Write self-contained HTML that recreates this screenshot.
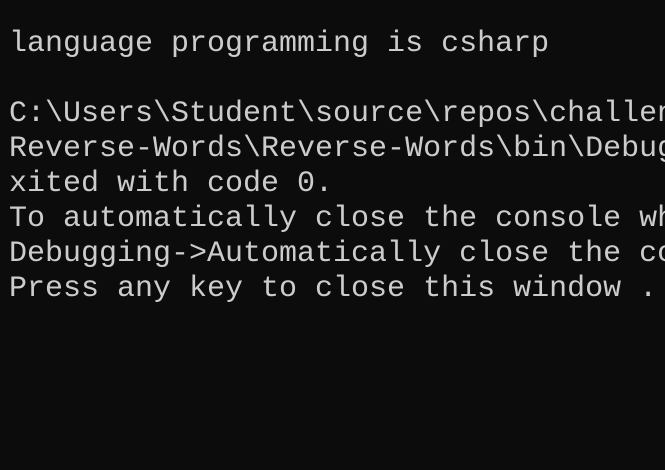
<!DOCTYPE html>
<html><head><meta charset="utf-8"><style>
html,body{margin:0;padding:0;background:#0c0c0c;width:665px;height:470px;overflow:hidden}
pre{margin:0;padding:27px 0 0 9px;width:656px;height:443px;overflow:hidden;font-family:"Liberation Mono","DejaVu Sans Mono",monospace;font-size:30px;line-height:35px;color:#cccccc;white-space:pre;}
</style></head><body><pre>language programming is csharp

C:\Users\Student\source\repos\challen
Reverse-Words\Reverse-Words\bin\Debug
xited with code 0.
To automatically close the console wh
Debugging->Automatically close the co
Press any key to close this window . </pre></body></html>
